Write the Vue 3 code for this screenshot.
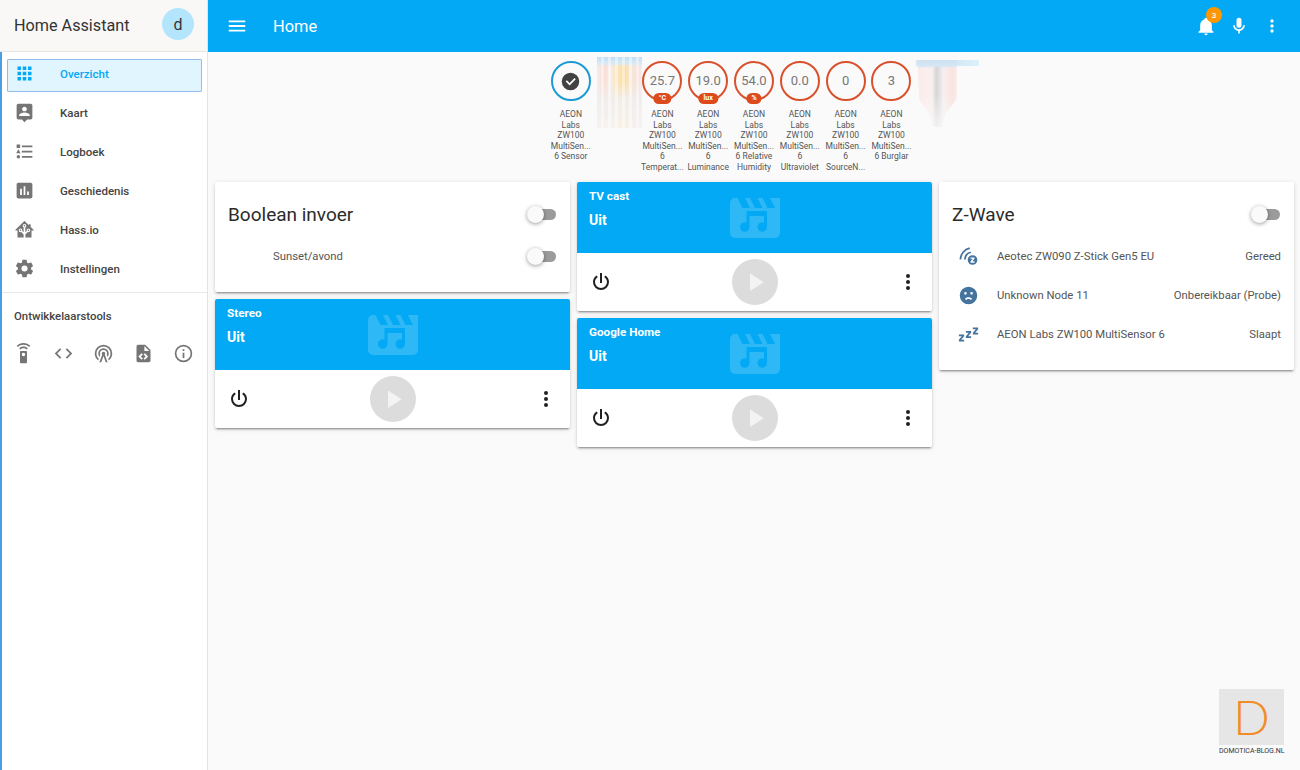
<script setup>
const icons = {
  menu: 'M3,6H21V8H3V6M3,11H21V13H3V11M3,16H21V18H3V16Z',
  bell: 'M21,19V20H3V19L5,17V11C5,7.9 7.03,5.17 10,4.29C10,4.19 10,4.1 10,4A2,2 0 0,1 12,2A2,2 0 0,1 14,4C14,4.1 14,4.19 14,4.29C16.97,5.17 19,7.9 19,11V17L21,19M14,21A2,2 0 0,1 12,23A2,2 0 0,1 10,21',
  mic: 'M12,2A3,3 0 0,1 15,5V11A3,3 0 0,1 12,14A3,3 0 0,1 9,11V5A3,3 0 0,1 12,2M19,11C19,14.53 16.39,17.44 13,17.93V21H11V17.93C7.61,17.44 5,14.53 5,11H7A5,5 0 0,0 12,16A5,5 0 0,0 17,11H19Z',
  dots: 'M12,16A2,2 0 0,1 14,18A2,2 0 0,1 12,20A2,2 0 0,1 10,18A2,2 0 0,1 12,16M12,10A2,2 0 0,1 14,12A2,2 0 0,1 12,14A2,2 0 0,1 10,12A2,2 0 0,1 12,10M12,4A2,2 0 0,1 14,6A2,2 0 0,1 12,8A2,2 0 0,1 10,6A2,2 0 0,1 12,4Z',
  apps: 'M16,20H20V16H16M16,14H20V10H16M10,8H14V4H10M16,8H20V4H16M10,14H14V10H10M4,14H8V10H4M4,20H8V16H4M10,20H14V16H10M4,8H8V4H4V8Z',
  map: 'M18,16H6V15.1C6,13.1 10,12 12,12C14,12 18,13.1 18,15.1M12,5.3C13.5,5.3 14.7,6.5 14.7,8C14.7,9.5 13.5,10.7 12,10.7C10.5,10.7 9.3,9.5 9.3,8C9.3,6.5 10.5,5.3 12,5.3M19,2H5C3.89,2 3,2.89 3,4V18A2,2 0 0,0 5,20H9L12,23L15,20H19A2,2 0 0,0 21,18V4C21,2.89 20.1,2 19,2Z',
  list: 'M5,9.5L7.5,14H2.5L5,9.5M3,4H7V8H3V4M5,20A2,2 0 0,0 7,18A2,2 0 0,0 5,16A2,2 0 0,0 3,18A2,2 0 0,0 5,20M9,5V7H21V5H9M9,19H21V17H9V19M9,13H21V11H9V13Z',
  poll: 'M17,17H15V13H17M13,17H11V7H13M9,17H7V10H9M19,3H5C3.89,3 3,3.89 3,5V19A2,2 0 0,0 5,21H19A2,2 0 0,0 21,19V5C21,3.89 20.1,3 19,3Z',
  hass: 'M21.8,13H20V21H13V17.67L15.79,14.88L16.5,15C17.66,15 18.6,14.06 18.6,12.9C18.6,11.74 17.66,10.8 16.5,10.8A2.1,2.1 0 0,0 14.4,12.9L14.5,13.61L13,15.13V9.65C13.66,9.29 14.1,8.6 14.1,7.8A2.1,2.1 0 0,0 12,5.7A2.1,2.1 0 0,0 9.9,7.8C9.9,8.6 10.34,9.29 11,9.65V15.13L9.5,13.61L9.6,12.9A2.1,2.1 0 0,0 7.5,10.8A2.1,2.1 0 0,0 5.4,12.9A2.1,2.1 0 0,0 7.5,15L8.21,14.88L11,17.67V21H4V13H2.25C1.83,13 1.42,13 1.42,12.79C1.43,12.57 1.85,12.15 2.28,11.72L11,3C11.33,2.67 11.67,2.33 12,2.33C12.33,2.33 12.67,2.67 13,3L17,7V6H19V9L21.78,11.78C22.18,12.18 22.59,12.59 22.6,12.8C22.6,13 22.2,13 21.8,13M7.5,12A0.9,0.9 0 0,1 8.4,12.9A0.9,0.9 0 0,1 7.5,13.8A0.9,0.9 0 0,1 6.6,12.9A0.9,0.9 0 0,1 7.5,12M16.5,12C17,12 17.4,12.4 17.4,12.9C17.4,13.4 17,13.8 16.5,13.8A0.9,0.9 0 0,1 15.6,12.9A0.9,0.9 0 0,1 16.5,12M12,6.9C12.5,6.9 12.9,7.3 12.9,7.8C12.9,8.3 12.5,8.7 12,8.7C11.5,8.7 11.1,8.3 11.1,7.8C11.1,7.3 11.5,6.9 12,6.9Z',
  gear: 'M12,15.5A3.5,3.5 0 0,1 8.5,12A3.5,3.5 0 0,1 12,8.5A3.5,3.5 0 0,1 15.5,12A3.5,3.5 0 0,1 12,15.5M19.43,12.97C19.47,12.65 19.5,12.33 19.5,12C19.5,11.67 19.47,11.34 19.43,11L21.54,9.37C21.73,9.22 21.78,8.95 21.66,8.73L19.66,5.27C19.54,5.05 19.27,4.96 19.05,5.05L16.56,6.05C16.04,5.66 15.5,5.32 14.87,5.07L14.5,2.42C14.46,2.18 14.25,2 14,2H10C9.75,2 9.54,2.18 9.5,2.42L9.13,5.07C8.5,5.32 7.96,5.66 7.44,6.05L4.95,5.05C4.73,4.96 4.46,5.05 4.34,5.27L2.34,8.73C2.21,8.95 2.27,9.22 2.46,9.37L4.57,11C4.53,11.34 4.5,11.67 4.5,12C4.5,12.33 4.53,12.65 4.57,12.97L2.46,14.63C2.27,14.78 2.21,15.05 2.34,15.27L4.34,18.73C4.46,18.95 4.73,19.03 4.95,18.95L7.44,17.94C7.96,18.34 8.5,18.68 9.13,18.93L9.5,21.58C9.54,21.82 9.75,22 10,22H14C14.25,22 14.46,21.82 14.5,21.58L14.87,18.93C15.5,18.67 16.04,18.34 16.56,17.94L19.05,18.95C19.27,19.03 19.54,18.95 19.66,18.73L21.66,15.27C21.78,15.05 21.73,14.78 21.54,14.63L19.43,12.97Z',
  remote: 'M12,0C8.96,0 6.21,1.23 4.22,3.22L5.63,4.63C7.26,3 9.5,2 12,2C14.5,2 16.74,3 18.36,4.64L19.77,3.23C17.79,1.23 15.04,0 12,0M7.05,6.05L8.46,7.46C9.37,6.56 10.62,6 12,6C13.38,6 14.63,6.56 15.54,7.46L16.95,6.05C15.68,4.78 13.93,4 12,4C10.07,4 8.32,4.78 7.05,6.05M12,15A2,2 0 0,1 10,13A2,2 0 0,1 12,11A2,2 0 0,1 14,13A2,2 0 0,1 12,15M15,9H9A1,1 0 0,0 8,10V22A1,1 0 0,0 9,23H15A1,1 0 0,0 16,22V10A1,1 0 0,0 15,9Z',
  code: 'M14.6,16.6L19.2,12L14.6,7.4L16,6L22,12L16,18L14.6,16.6M9.4,16.6L4.8,12L9.4,7.4L8,6L2,12L8,18L9.4,16.6Z',
  tower: 'M12,10A2,2 0 0,1 14,12C14,12.5 13.82,12.94 13.53,13.29L16.7,22H14.57L12,14.93L9.43,22H7.3L10.47,13.29C10.18,12.94 10,12.5 10,12A2,2 0 0,1 12,10M12,8A4,4 0 0,0 8,12C8,12.5 8.1,13 8.28,13.46L7.4,15.86C6.53,14.81 6,13.47 6,12A6,6 0 0,1 12,6A6,6 0 0,1 18,12C18,13.47 17.47,14.81 16.6,15.86L15.72,13.46C15.9,13 16,12.5 16,12A4,4 0 0,0 12,8M12,4A8,8 0 0,0 4,12C4,14.36 5,16.5 6.64,17.94L5.92,19.94C3.54,18.11 2,15.23 2,12A10,10 0 0,1 12,2A10,10 0 0,1 22,12C22,15.23 20.46,18.11 18.08,19.94L17.36,17.94C19,16.5 20,14.36 20,12A8,8 0 0,0 12,4Z',
  fileXml: 'M13,9H18.5L13,3.5V9M6,2H14L20,8V20A2,2 0 0,1 18,22H6C4.89,22 4,21.1 4,20V4C4,2.89 4.89,2 6,2M6.12,15.5L9.86,19.24L11.28,17.83L8.95,15.5L11.28,13.17L9.86,11.76L6.12,15.5M17.28,15.5L13.54,11.76L12.12,13.17L14.45,15.5L12.12,17.83L13.54,19.24L17.28,15.5Z',
  info: 'M11,9H13V7H11M12,20C7.59,20 4,16.41 4,12C4,7.59 7.59,4 12,4C16.41,4 20,7.59 20,12C20,16.41 16.41,20 12,20M12,2A10,10 0 0,0 2,12A10,10 0 0,0 12,22A10,10 0 0,0 22,12A10,10 0 0,0 12,2M11,17H13V11H11V17Z',
  check: 'M12,2A10,10 0 0,1 22,12A10,10 0 0,1 12,22A10,10 0 0,1 2,12A10,10 0 0,1 12,2M11,16.5L18,9.5L16.59,8.09L11,13.67L7.91,10.59L6.5,12L11,16.5Z',
  movie: 'M18,4L20,8H17L15,4H13L15,8H12L10,4H8L10,8H7L5,4H4A2,2 0 0,0 2,6V18A2,2 0 0,0 4,20H20A2,2 0 0,0 22,18V4H18Z',
  note: 'M8.6,9.2H16.8V15.6A1.9,1.9 0 1,1 15.6,13.85V11.2H9.8V15.6A1.9,1.9 0 1,1 8.6,13.85Z',
  power: 'M16.56,5.44L15.11,6.89C16.84,7.94 18,9.83 18,12A6,6 0 0,1 12,18A6,6 0 0,1 6,12C6,9.83 7.16,7.94 8.88,6.88L7.44,5.44C5.36,6.88 4,9.28 4,12A8,8 0 0,0 12,20A8,8 0 0,0 20,12C20,9.28 18.64,6.88 16.56,5.44M13,3H11V13H13',
  play: 'M8,5.14V19.14L19,12.14L8,5.14Z',
  sad: 'M12,2A10,10 0 0,0 2,12A10,10 0 0,0 12,22A10,10 0 0,0 22,12A10,10 0 0,0 12,2M15.5,8A1.5,1.5 0 0,1 17,9.5A1.5,1.5 0 0,1 15.5,11A1.5,1.5 0 0,1 14,9.5A1.5,1.5 0 0,1 15.5,8M8.5,8A1.5,1.5 0 0,1 10,9.5A1.5,1.5 0 0,1 8.5,11A1.5,1.5 0 0,1 7,9.5A1.5,1.5 0 0,1 8.5,8M12,14C13.75,14 15.29,14.72 16.19,15.81L14.77,17.23C14.32,16.5 13.25,16 12,16C10.75,16 9.68,16.5 9.23,17.23L7.81,15.81C8.71,14.72 10.25,14 12,14Z',
  sleep: 'M23,12H17V10L20.39,6H17V4H23V6L19.62,10H23V12M15,16H9V14L12.39,10H9V8H15V10L11.62,14H15V16M7,20H1V18L4.39,14H1V12H7V14L3.62,18H7V20Z',
  zwave: 'M1.8,15.4A14.8,14.8 0 0,1 13.2,1.4L13.7,3.4A12.8,12.8 0 0,0 3.8,15.4ZM6.8,15.4A9.8,9.8 0 0,1 14.4,6.2L14.9,8.1A7.8,7.8 0 0,0 8.8,15.4ZM16.6,10.5A5.5,5.5 0 1,0 16.6,21.5A5.5,5.5 0 1,0 16.6,10.5ZM14.3,13H18.9V14.4L16.5,17.3H18.9V19H14.3V17.6L16.7,14.7H14.3Z',
}

const navItems = [
  { label: 'Overzicht', icon: 'apps', active: true },
  { label: 'Kaart', icon: 'map' },
  { label: 'Logboek', icon: 'list' },
  { label: 'Geschiedenis', icon: 'poll' },
  { label: 'Hass.io', icon: 'hass' },
  { label: 'Instellingen', icon: 'gear' },
]

const devTools = ['remote', 'code', 'tower', 'fileXml', 'info']

const badges = [
  { kind: 'check', lines: ['AEON', 'Labs', 'ZW100', 'MultiSen...', '6 Sensor'] },
  { kind: 'image', cls: 'graph-one' },
  { value: '25.7', unit: '°C', lines: ['AEON', 'Labs', 'ZW100', 'MultiSen...', '6', 'Temperat...'] },
  { value: '19.0', unit: 'lux', lines: ['AEON', 'Labs', 'ZW100', 'MultiSen...', '6', 'Luminance'] },
  { value: '54.0', unit: '%', lines: ['AEON', 'Labs', 'ZW100', 'MultiSen...', '6 Relative', 'Humidity'] },
  { value: '0.0', lines: ['AEON', 'Labs', 'ZW100', 'MultiSen...', '6', 'Ultraviolet'] },
  { value: '0', lines: ['AEON', 'Labs', 'ZW100', 'MultiSen...', '6', 'SourceN...'] },
  { value: '3', lines: ['AEON', 'Labs', 'ZW100', 'MultiSen...', '6 Burglar'] },
  { kind: 'image', cls: 'graph-two' },
]

const zwaveRows = [
  { icon: 'zwave', name: 'Aeotec ZW090 Z-Stick Gen5 EU', state: 'Gereed' },
  { icon: 'sad', name: 'Unknown Node 11', state: 'Onbereikbaar (Probe)' },
  { icon: 'sleep', name: 'AEON Labs ZW100 MultiSensor 6', state: 'Slaapt' },
]

const columns = [
  [{ type: 'bool' }, { type: 'media', name: 'Stereo' }],
  [{ type: 'media', name: 'TV cast' }, { type: 'media', name: 'Google Home' }],
  [{ type: 'zwave' }],
]
</script>

<template>
  <div class="shell">
    <aside class="sidebar">
      <div class="side-head">
        <span class="side-title">Home Assistant</span>
        <span class="avatar">d</span>
      </div>
      <div class="side-body">
        <nav class="nav">
          <a v-for="item in navItems" :key="item.label" class="nav-item" :class="{ active: item.active }">
            <svg class="nav-icon" viewBox="0 0 24 24"><path :d="icons[item.icon]" /></svg>
            <span>{{ item.label }}</span>
          </a>
        </nav>
        <div class="dev">
          <div class="dev-title">Ontwikkelaarstools</div>
          <div class="dev-icons">
            <svg v-for="tool in devTools" :key="tool" class="nav-icon" viewBox="0 0 24 24"><path :d="icons[tool]" /></svg>
          </div>
        </div>
      </div>
    </aside>

    <div class="page">
      <header class="topbar">
        <svg class="bar-icon menu" viewBox="0 0 24 24"><path :d="icons.menu" /></svg>
        <div class="bar-title">Home</div>
        <div class="bar-actions">
          <span class="bell">
            <svg class="bar-icon small" viewBox="0 0 24 24"><path :d="icons.bell" /></svg>
            <span class="bell-count">3</span>
          </span>
          <svg class="bar-icon small" viewBox="0 0 24 24"><path :d="icons.mic" /></svg>
          <svg class="bar-icon small" viewBox="0 0 24 24"><path :d="icons.dots" /></svg>
        </div>
      </header>

      <main class="content">
        <div class="badges">
          <div v-for="(badge, i) in badges" :key="i" class="badge">
            <div v-if="badge.kind === 'image'" class="graph" :class="badge.cls"></div>
            <template v-else>
              <div class="ring" :class="{ ok: badge.kind === 'check' }">
                <svg v-if="badge.kind === 'check'" class="ring-check" viewBox="0 0 24 24"><path :d="icons.check" /></svg>
                <template v-else>{{ badge.value }}</template>
                <span v-if="badge.unit" class="unit">{{ badge.unit }}</span>
              </div>
              <div class="badge-label">
                <div v-for="(line, n) in badge.lines" :key="n">{{ line }}</div>
              </div>
            </template>
          </div>
        </div>

        <div class="columns">
          <div v-for="(col, c) in columns" :key="c" class="column">
            <template v-for="(card, k) in col" :key="k">
              <section v-if="card.type === 'bool'" class="card entities bool">
                <div class="card-head">
                  <h2>Boolean invoer</h2>
                  <span class="switch"></span>
                </div>
                <div class="row">
                  <span class="row-icon"></span>
                  <span class="row-name">Sunset/avond</span>
                  <span class="switch"></span>
                </div>
              </section>

              <section v-else-if="card.type === 'zwave'" class="card entities zw">
                <div class="card-head">
                  <h2>Z-Wave</h2>
                  <span class="switch"></span>
                </div>
                <div v-for="row in zwaveRows" :key="row.name" class="row">
                  <span class="row-icon">
                    <svg viewBox="0 0 24 24"><path :d="icons[row.icon]" /></svg>
                  </span>
                  <span class="row-name">{{ row.name }}</span>
                  <span class="row-state">{{ row.state }}</span>
                </div>
              </section>

              <section v-else class="card media">
                <div class="media-top">
                  <svg class="media-art" viewBox="0 0 24 24">
                    <path class="art-body" :d="icons.movie" />
                    <path class="art-note" :d="icons.note" />
                  </svg>
                  <div class="media-name">{{ card.name }}</div>
                  <div class="media-state">Uit</div>
                </div>
                <div class="media-controls">
                  <svg class="ctl" viewBox="0 0 24 24"><path :d="icons.power" /></svg>
                  <span class="play">
                    <svg viewBox="0 0 24 24"><path :d="icons.play" /></svg>
                  </span>
                  <svg class="ctl" viewBox="0 0 24 24"><path :d="icons.dots" /></svg>
                </div>
              </section>
            </template>
          </div>
        </div>
      </main>
    </div>

    <div class="watermark">
      <div class="mark-box">D</div>
      <div class="mark-text">DOMOTICA-BLOG.NL</div>
    </div>
  </div>
</template>

<style>
html,
body {
  margin: 0;
  background: #fafafa;
}
</style>

<style scoped>
.shell {
  position: relative;
  display: flex;
  width: 1300px;
  height: 770px;
  overflow: hidden;
  font-family: Roboto, "Liberation Sans", sans-serif;
  color: #212121;
  background: #fafafa;
}

.sidebar {
  width: 208px;
  flex: none;
  display: flex;
  flex-direction: column;
  box-sizing: border-box;
  border-right: 1px solid #e4e4e4;
  background: #fff;
}

.side-head {
  height: 52px;
  flex: none;
  box-sizing: border-box;
  display: flex;
  align-items: center;
  justify-content: space-between;
  padding: 0 13px 0 14px;
  background: #f9f8f7;
  border-bottom: 1px solid #e8e4e0;
}

.side-title {
  font-size: 16.2px;
  color: #333;
}

.avatar {
  width: 32px;
  height: 32px;
  margin-bottom: 3px;
  border-radius: 50%;
  background: #b3e5fc;
  display: flex;
  align-items: center;
  justify-content: center;
  font-size: 16px;
  color: #333;
}

.side-body {
  flex: 1;
  border-left: 2px solid #4a9fe0;
}

.nav {
  padding: 7px 5px 0 5px;
  border-bottom: 1px solid #e8e8e8;
  height: 241px;
  box-sizing: border-box;
}

.nav-item {
  height: 33px;
  margin-bottom: 6px;
  padding-bottom: 4px;
  display: flex;
  align-items: center;
  box-sizing: border-box;
  border: 1px solid transparent;
  border-radius: 1px;
  padding-left: 5.5px;
  font-size: 11.5px;
  font-weight: 500;
  color: #444;
}

.nav-item.active {
  background: #e1f5fe;
  border-color: #95bcec;
  color: #03a9f4;
}

.nav-item.active .nav-icon {
  fill: #03a9f4;
}

.nav-icon {
  width: 21px;
  height: 21px;
  flex: none;
  fill: #757575;
}

.nav-item .nav-icon {
  margin-right: 25.5px;
}

.dev {
  padding: 16px 12px;
}

.dev-title {
  font-size: 11.4px;
  font-weight: 500;
  color: #444;
}

.dev-icons {
  display: flex;
  gap: 19px;
  margin-top: 20px;
  margin-left: -1px;
}

.page {
  flex: 1;
  min-width: 0;
  display: flex;
  flex-direction: column;
}

.topbar {
  height: 52px;
  flex: none;
  display: flex;
  align-items: center;
  background: #03a9f4;
  color: #fff;
  padding: 0 18px;
}

.bar-icon {
  fill: #fff;
  display: block;
}

.bar-icon.menu {
  width: 22px;
  height: 22px;
}

.bar-icon.small {
  width: 20px;
  height: 20px;
}

.bar-title {
  margin-left: 25px;
  font-size: 16.4px;
  flex: 1;
}

.bar-actions {
  display: flex;
  align-items: center;
  gap: 13px;
}

.bell {
  position: relative;
  display: block;
}

.bell-count {
  position: absolute;
  top: -9px;
  right: -6px;
  width: 16px;
  height: 16px;
  border-radius: 50%;
  background: #ff9800;
  font-size: 8px;
  font-weight: 500;
  display: flex;
  align-items: center;
  justify-content: center;
}

.content {
  flex: 1;
  background: #fafafa;
}

.badges {
  height: 130px;
  display: flex;
  justify-content: center;
  box-sizing: border-box;
  padding-top: 9px;
}

.badge {
  width: 45.8px;
  flex: none;
  position: relative;
  display: flex;
  flex-direction: column;
  align-items: center;
}

.ring {
  position: relative;
  width: 40px;
  height: 40px;
  flex: none;
  box-sizing: border-box;
  border: 2px solid #d9512c;
  border-radius: 50%;
  display: flex;
  align-items: center;
  justify-content: center;
  padding-bottom: 2px;
  font-size: 13px;
  color: #777;
}

.ring.ok {
  border-color: #1c9ad6;
  padding-bottom: 0;
}

.ring-check {
  width: 21px;
  height: 21px;
  fill: #424242;
}

.unit {
  position: absolute;
  left: 50%;
  bottom: -4.5px;
  transform: translateX(-50%);
  height: 11px;
  padding: 0 5px;
  box-sizing: border-box;
  border-radius: 6px;
  background: #dd4b1c;
  color: #fff;
  font-size: 7px;
  font-weight: 700;
  line-height: 11px;
  text-align: center;
}

.badge-label {
  margin-top: 8px;
  width: 100%;
  font-size: 8.5px;
  line-height: 10.5px;
  text-align: center;
  white-space: nowrap;
  color: #555;
  display: flex;
  flex-direction: column;
  align-items: center;
}

.graph {
  position: absolute;
  top: -4px;
}

.graph-one {
  left: 3px;
  width: 45px;
  height: 71px;
  background:
    linear-gradient(to bottom, #bfe0f6 0, #d7e9f3 6px, rgba(255, 255, 255, 0) 10px),
    linear-gradient(to bottom, rgba(244, 242, 242, 0) 35%, rgba(240, 238, 238, 0.92) 60%, rgba(246, 246, 246, 0.75) 100%),
    linear-gradient(to right, #f1efef 0, #fbdcd4 14%, #f5ece2 30%, #fde3b4 48%, #fcdca0 62%, #f6ead9 74%, #fbdcd4 90%, #f4eeee 100%);
}

.graph-one::after {
  content: "";
  position: absolute;
  inset: 0;
  background: repeating-linear-gradient(to right, rgba(255, 255, 255, 0) 0, rgba(255, 255, 255, 0) 4px, rgba(255, 255, 255, 0.45) 4px, rgba(255, 255, 255, 0.45) 7px);
}

.graph-two {
  left: 2px;
  top: -1px;
  width: 63px;
  height: 67px;
  background:
    linear-gradient(to right, #d5e6f4 0, #d5e6f4 60%, #dbf1fc 100%) top left / 100% 6px no-repeat;
}

.graph-two::before {
  content: "";
  position: absolute;
  left: 1px;
  top: 0;
  width: 40px;
  height: 67px;
  clip-path: polygon(0 0, 100% 0, 100% 58%, 70% 80%, 62% 100%, 40% 100%, 30% 80%, 5% 60%);
  background:
    linear-gradient(to bottom, #d0e2f0 0, #d5e6f4 6px, rgba(250, 250, 250, 0) 8px),
    linear-gradient(to bottom, rgba(250, 250, 250, 0) 50%, rgba(250, 250, 250, 0.75) 100%),
    linear-gradient(to right, #f8ecea 0, #fbeeec 25%, #f6f0f0 38%, #d8d5d7 48%, #e2e0e2 56%, #f5f0f0 66%, #fbe2dc 90%, #f8f0f0 100%);
}

.columns {
  display: grid;
  grid-template-columns: repeat(3, 355px);
  gap: 7px;
  padding-left: 7px;
}

.column {
  display: flex;
  flex-direction: column;
  gap: 7px;
  align-items: stretch;
}

.card {
  background: #fff;
  border-radius: 2px;
  box-shadow: 0 2px 2px rgba(0, 0, 0, 0.14), 0 1px 5px rgba(0, 0, 0, 0.12), 0 3px 1px -2px rgba(0, 0, 0, 0.2);
}

.entities {
  box-sizing: border-box;
  padding: 0 13px;
}

.bool {
  height: 110px;
}

.zw {
  height: 188px;
}

.card-head {
  height: 55px;
  display: flex;
  align-items: center;
  justify-content: space-between;
  padding-top: 10px;
  box-sizing: border-box;
}

.card-head h2 {
  margin: 0;
  font-size: 19px;
  font-weight: 400;
  color: #2b2b2b;
}

.switch {
  position: relative;
  width: 28px;
  height: 11px;
  flex: none;
  border-radius: 6px;
  background: #9b9b9b;
  margin-right: 1px;
}

.switch::after {
  content: "";
  position: absolute;
  left: -1px;
  top: -3px;
  width: 17px;
  height: 17px;
  border-radius: 50%;
  background: #fafafa;
  box-shadow: 0 1px 4px rgba(0, 0, 0, 0.4);
}

.row {
  height: 39px;
  display: flex;
  align-items: center;
  font-size: 11.3px;
  color: #555;
}

.row-icon {
  width: 45px;
  flex: none;
  display: flex;
  justify-content: center;
  padding-right: 13px;
  box-sizing: border-box;
}

.row-icon svg {
  width: 21px;
  height: 21px;
  fill: #44739e;
  fill-rule: evenodd;
}

.row-name {
  flex: 1;
}

.row-state {
  flex: none;
}

.media {
  height: 129px;
  display: flex;
  flex-direction: column;
}

.media-top {
  position: relative;
  height: 71px;
  flex: none;
  background: #03a9f4;
  color: #fff;
  box-sizing: border-box;
  padding: 7px 12px 0;
  font-weight: 700;
  border-radius: 2px 2px 0 0;
}

.media-art {
  position: absolute;
  left: 50%;
  top: 50%;
  width: 60px;
  height: 60px;
  transform: translate(-50%, -50%);
}

.art-body {
  fill: #2fb8f6;
}

.art-note {
  fill: #03a9f4;
}

.media-name {
  position: relative;
  font-size: 11.7px;
  line-height: 14px;
}

.media-state {
  position: relative;
  margin-top: 7.5px;
  font-size: 14px;
  line-height: 18px;
}

.media-controls {
  flex: 1;
  display: flex;
  align-items: center;
  justify-content: space-between;
  padding: 0 12px;
}

.ctl {
  width: 24px;
  height: 24px;
  fill: #212121;
}

.play {
  width: 46px;
  height: 46px;
  border-radius: 50%;
  background: #dcdcdc;
  display: flex;
  align-items: center;
  justify-content: center;
}

.play svg {
  width: 30px;
  height: 30px;
  fill: #f3f3f3;
}

.watermark {
  position: absolute;
  left: 1219px;
  top: 689px;
  width: 65px;
}

.mark-box {
  height: 56px;
  background: #e6e6e6;
  color: #f28c28;
  font-family: Lato, sans-serif;
  font-weight: 300;
  font-size: 48px;
  line-height: 56px;
  text-align: center;
}

.mark-text {
  margin-top: 1px;
  font-size: 7px;
  line-height: 10px;
  white-space: nowrap;
  text-align: center;
  color: #333;
}
</style>
